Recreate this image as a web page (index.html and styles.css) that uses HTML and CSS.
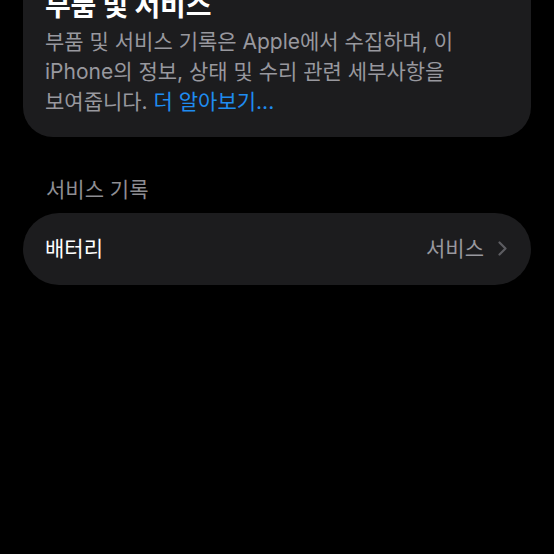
FILE: index.html
```html
<!DOCTYPE html>
<html lang="ko">
<head>
<meta charset="utf-8">
<link rel="stylesheet" href="styles.css">
</head>
<body>
<div class="screen">
  <section class="card info">
    <h1 class="title">부품 및 서비스</h1>
    <p class="desc">부품 및 서비스 기록은 Apple에서 수집하며, 이<br>iPhone의 정보, 상태 및 수리 관련 세부사항을<br>보여줍니다. <span class="link">더 알아보기...</span></p>
  </section>

  <h2 class="section-header">서비스 기록</h2>
  <div class="card row">
    <span class="row-label">배터리</span>
    <span class="row-value">서비스</span>
    <svg class="chevron" width="10" height="15" viewBox="0 0 10 15" aria-hidden="true">
      <polyline points="1.5,1.5 7.5,7.5 1.5,13.5" fill="none" stroke="#5c5c61" stroke-width="2.2" stroke-linecap="round" stroke-linejoin="round"/>
    </svg>
  </div>
</div>
</body>
</html>
```

FILE: styles.css
```css
html, body {
  margin: 0;
  padding: 0;
  background: #000;
}
body {
  width: 554px;
  height: 554px;
  overflow: hidden;
  font-family: "Inter", "Noto Sans CJK KR", sans-serif;
  color: #fff;
}
.screen {
  display: flex;
  flex-direction: column;
}
.card {
  background: #1c1c1e;
  margin: 0 23px;
  border-radius: 30px;
}
.info {
  margin-top: -29px;
  padding: 20px 22px 20px 22px;
}
.title {
  margin: 0;
  font-size: 28px;
  font-weight: 700;
  line-height: 30px;
  letter-spacing: -0.2px;
}
.desc {
  margin: 5.6px 0 0;
  font-size: 21px;
  line-height: 30px;
  color: #98989e;
  white-space: nowrap;
}
.link {
  color: #1f8cf0;
}
.section-header {
  margin: 41.6px 0 10.4px 46px;
  font-size: 21px;
  font-weight: 400;
  line-height: 24px;
  color: #8e8e93;
}
.row {
  height: 72px;
  border-radius: 36px;
  display: flex;
  align-items: center;
  padding: 0 23px 0 22px;
  font-size: 21px;
  line-height: 30px;
}
.row-label {
  flex: 1;
  color: #fff;
}
.row-value {
  color: #98989e;
  margin-right: 14px;
}
.chevron {
  display: block;
}
```
